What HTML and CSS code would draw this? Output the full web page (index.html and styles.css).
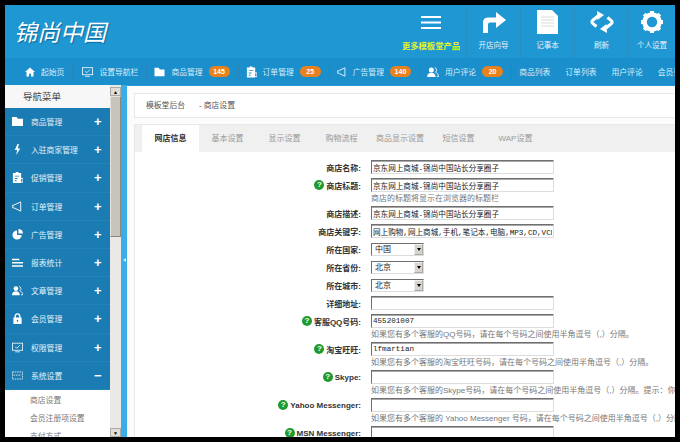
FILE: index.html
```html
<!DOCTYPE html>
<html lang="zh">
<head>
<meta charset="utf-8">
<title>锦尚中国</title>
<link rel="stylesheet" href="styles.css">
</head>
<body>
<svg class="defs" width="0" height="0">
  <symbol id="i-folder" viewBox="0 0 12 12"><path d="M0 1h5l1.500 2H12v8H0z" fill="currentColor"/></symbol>
  <symbol id="i-bolt" viewBox="0 0 12 12"><path d="M6 0 3 6.500h2.600L4.600 12 9 4.800H6.400L7.600 0z" fill="currentColor"/></symbol>
  <symbol id="i-clip" viewBox="0 0 12 12"><path d="M4 0h3v1h3v11H1V1h3zM3 4v1h5V4zm0 2.500v1h3v-1zm0 2.500v1h2V9z" fill="currentColor" fill-rule="evenodd"/><rect x="7" y="7" width="5" height="4" fill="none" stroke="currentColor"/></symbol>
  <symbol id="i-speaker" viewBox="0 0 12 12"><path d="M9.500 1 2 4.500H.8v3H2L9.500 11z" fill="none" stroke="currentColor"/></symbol>
  <symbol id="i-pie" viewBox="0 0 12 12"><path d="M5.500 1.500A5 5 0 1 0 10.500 6.500H5.500z" fill="currentColor"/><path d="M7 0a5 5 0 0 1 5 5H7z" fill="currentColor"/></symbol>
  <symbol id="i-list" viewBox="0 0 12 12"><path d="M0 2h8v1.500H0zM0 5.500h12V7H0zM0 9h12v1.500H0z" fill="currentColor"/></symbol>
  <symbol id="i-users" viewBox="0 0 14 12"><circle cx="5" cy="3.500" r="3" fill="currentColor"/><path d="M0 12c0-3.500 2-5 5-5s5 1.500 5 5z" fill="currentColor"/><path d="M9 .8a3 3 0 0 1 1 5.400c2 .6 3.500 2.500 3.500 5.300h-2" fill="none" stroke="currentColor"/></symbol>
  <symbol id="i-lock" viewBox="0 0 12 12"><path d="M3.500 5.500V3.500a2.500 2.500 0 0 1 5 0v2" fill="none" stroke="currentColor" stroke-width="1.500"/><path d="M1.500 5h9v7h-9zM5.300 7.500v2h1.400v-2z" fill="currentColor" fill-rule="evenodd"/></symbol>
  <symbol id="i-monitor" viewBox="0 0 14 12"><rect x=".5" y=".5" width="13" height="9" fill="none" stroke="currentColor"/><path d="m4 5 2 2 4-4" fill="none" stroke="currentColor"/><path d="M4 11.500h6" stroke="currentColor"/></symbol>
  <symbol id="i-keys" viewBox="0 0 14 12"><rect x=".5" y="1.500" width="13" height="9" fill="none" stroke="currentColor" stroke-dasharray="2 1"/><path d="M2 5.500h10" stroke="currentColor" stroke-dasharray="2 1"/></symbol>
  <symbol id="i-home" viewBox="0 0 12 12"><path d="M6 .5 0 6h1.800v5.500h3V8h2.400v3.500h3V6H12z" fill="currentColor"/></symbol>
</svg>
<div class="app">
  <header class="top">
    <div class="logo">锦尚中国</div>
    <div class="tools">
      <a class="tool tool-more">
        <svg class="tool-icon" width="20" height="13" viewBox="0 0 20 13"><path d="M0 0h20v2H0zM0 5.500h20v2H0zM0 11h20v2H0z" fill="#fff"/></svg>
        <span class="more-label">更多模板堂产品</span>
      </a>
      <a class="tool">
        <svg class="tool-icon" width="24" height="24" viewBox="0 0 24 24"><path d="M1 23V12c0-3 2-4.500 5-4.500h8V2l10 8-10 8v-5.500H8C6.500 12.500 6 13.500 6 15v8z" fill="#fff"/></svg>
        <span>开店向导</span>
      </a>
      <a class="tool">
        <svg class="tool-icon" width="21" height="24" viewBox="0 0 21 24"><path d="M0 0h15l6 6v18H0z" fill="#fff"/><path d="M4 7h13M4 10h13M4 13h13M4 16h13" stroke="#dcdcdc"/></svg>
        <span>记事本</span>
      </a>
      <a class="tool">
        <svg class="tool-icon" width="24" height="24" viewBox="0 0 24 24"><path d="M8 6 2.500 10.500c-1 .9-.8 2 .2 2.800L6.500 16.500" fill="none" stroke="#fff" stroke-width="3"/><path d="M7 1l7 4-6.500 5z" fill="#fff"/><path d="M16 18l5.500-4.500c1-.9.8-2-.2-2.800L17.500 7.500" fill="none" stroke="#fff" stroke-width="3"/><path d="M17 23l-7-4 6.500-5z" fill="#fff"/></svg>
        <span>刷新</span>
      </a>
      <a class="tool tool-last">
        <svg class="tool-icon" width="24" height="24" viewBox="0 0 24 24"><circle cx="12" cy="12" r="7.500" fill="none" stroke="#fff" stroke-width="4.500"/><path d="M12 1v22M1 12h22M4.200 4.200l15.600 15.600M19.800 4.200 4.200 19.800" stroke="#fff" stroke-width="4"/><circle cx="12" cy="12" r="5.200" fill="#1e97d3"/></svg>
        <span>个人设置</span>
      </a>
    </div>
  </header>
  <nav class="nav">
    <a class="nav-item ni-home"><svg class="nav-icon" width="10" height="10"><use href="#i-home"/></svg>起始页</a>
    <a class="nav-item"><svg class="nav-icon" width="11" height="10"><use href="#i-monitor"/></svg>设置导航栏</a>
    <a class="nav-item"><svg class="nav-icon" width="11" height="10"><use href="#i-folder"/></svg>商品管理<b class="badge">145</b></a>
    <a class="nav-item"><svg class="nav-icon" width="11" height="12"><use href="#i-clip"/></svg>订单管理<b class="badge">25</b></a>
    <a class="nav-item"><svg class="nav-icon" width="10" height="10"><use href="#i-speaker"/></svg>广告管理<b class="badge">140</b></a>
    <a class="nav-item"><svg class="nav-icon" width="12" height="10"><use href="#i-users"/></svg>用户评论<b class="badge">20</b></a>
    <a class="nav-link">商品列表</a>
    <a class="nav-link">订单列表</a>
    <a class="nav-link">用户评论</a>
    <a class="nav-link">会员列表</a>
  </nav>
  <div class="body">
    <aside class="side">
      <h2 class="side-title">导航菜单</h2>
      <ul class="menu">
        <li class="menu-row"><svg class="menu-icon" width="11" height="11"><use href="#i-folder"/></svg><span class="menu-text">商品管理</span><i class="sign">+</i></li>
        <li class="menu-row"><svg class="menu-icon" width="11" height="11"><use href="#i-bolt"/></svg><span class="menu-text">入驻商家管理</span><i class="sign">+</i></li>
        <li class="menu-row"><svg class="menu-icon" width="11" height="11"><use href="#i-clip"/></svg><span class="menu-text">促销管理</span><i class="sign">+</i></li>
        <li class="menu-row"><svg class="menu-icon" width="11" height="11"><use href="#i-speaker"/></svg><span class="menu-text">订单管理</span><i class="sign">+</i></li>
        <li class="menu-row"><svg class="menu-icon" width="11" height="11"><use href="#i-pie"/></svg><span class="menu-text">广告管理</span><i class="sign">+</i></li>
        <li class="menu-row"><svg class="menu-icon" width="11" height="11"><use href="#i-list"/></svg><span class="menu-text">报表统计</span><i class="sign">+</i></li>
        <li class="menu-row"><svg class="menu-icon" width="12" height="11"><use href="#i-users"/></svg><span class="menu-text">文章管理</span><i class="sign">+</i></li>
        <li class="menu-row"><svg class="menu-icon" width="11" height="11"><use href="#i-lock"/></svg><span class="menu-text">会员管理</span><i class="sign">+</i></li>
        <li class="menu-row"><svg class="menu-icon" width="12" height="11"><use href="#i-monitor"/></svg><span class="menu-text">权限管理</span><i class="sign">+</i></li>
        <li class="menu-row"><svg class="menu-icon" width="12" height="11"><use href="#i-keys"/></svg><span class="menu-text">系统设置</span><i class="sign">−</i></li>
      </ul>
      <ul class="submenu">
        <li>商店设置</li>
        <li>会员注册项设置</li>
        <li>支付方式</li>
      </ul>
    </aside>
    <div class="scrollbar">
      <span class="sb-btn">▲</span>
      <span class="sb-thumb"></span>
      <span class="sb-track"></span>
      <span class="sb-btn">▼</span>
    </div>
    <div class="splitter"><span class="split-arrow"></span></div>
    <main class="main">
      <div class="crumb"><span class="crumb-a">模板堂后台</span><span>- 商店设置</span></div>
      <section class="panel">
        <div class="tabs">
          <a class="tab tab-on">网店信息</a>
          <a class="tab">基本设置</a>
          <a class="tab">显示设置</a>
          <a class="tab">购物流程</a>
          <a class="tab">商品显示设置</a>
          <a class="tab">短信设置</a>
          <a class="tab">WAP设置</a>
        </div>
        <form class="form">
          <div class="row"><label class="lab">商店名称:</label><input class="inp" value="京东网上商城-锦尚中国站长分享圈子"></div>
          <div class="row"><label class="lab"><i class="help">?</i>商店标题:</label><input class="inp" value="京东网上商城-锦尚中国站长分享圈子"></div>
          <p class="hint">商店的标题将显示在浏览器的标题栏</p>
          <div class="row"><label class="lab">商店描述:</label><input class="inp" value="京东网上商城-锦尚中国站长分享圈子"></div>
          <div class="row"><label class="lab">商店关键字:</label><input class="inp" value="网上购物,网上商城,手机,笔记本,电脑,MP3,CD,VCD"></div>
          <div class="row"><label class="lab">所在国家:</label><div class="sel"><span class="sel-v">中国</span><span class="sel-b"></span></div></div>
          <div class="row"><label class="lab">所在省份:</label><div class="sel"><span class="sel-v">北京</span><span class="sel-b"></span></div></div>
          <div class="row"><label class="lab">所在城市:</label><div class="sel"><span class="sel-v">北京</span><span class="sel-b"></span></div></div>
          <div class="row"><label class="lab">详细地址:</label><input class="inp" value=""></div>
          <div class="row"><label class="lab"><i class="help">?</i>客服QQ号码:</label><input class="inp" value="455201007"></div>
          <p class="hint">如果您有多个客服的QQ号码，请在每个号码之间使用半角逗号（,）分隔。</p>
          <div class="row"><label class="lab"><i class="help">?</i>淘宝旺旺:</label><input class="inp" value="lfmartian"></div>
          <p class="hint">如果您有多个客服的淘宝旺旺号码，请在每个号码之间使用半角逗号（,）分隔。</p>
          <div class="row"><label class="lab"><i class="help">?</i>Skype:</label><input class="inp" value=""></div>
          <p class="hint">如果您有多个客服的Skype号码，请在每个号码之间使用半角逗号（,）分隔。提示：你需要</p>
          <div class="row"><label class="lab"><i class="help">?</i>Yahoo Messenger:</label><input class="inp" value=""></div>
          <p class="hint">如果您有多个客服的 Yahoo Messenger 号码，请在每个号码之间使用半角逗号（,）分隔。</p>
          <div class="row"><label class="lab"><i class="help">?</i>MSN Messenger:</label><input class="inp" value=""></div>
        </form>
      </section>
    </main>
  </div>
</div>
</body>
</html>
```
FILE: styles.css
```css
* { box-sizing: border-box; }
html, body { margin: 0; height: 100%; background: #000; }
body {
  padding: 5px;
  overflow: hidden;
  font-family: "Liberation Sans", "Noto Sans CJK SC", sans-serif;
  font-size: 8px;
  color: #555;
}
.defs { display: block; position: absolute; }
ul { list-style: none; margin: 0; padding: 0; }
.app { width: 670px; height: 432px; overflow: hidden; background: #fff; display: flex; flex-direction: column; }

.top { height: 53px; flex: none; background: #1e97d3; display: flex; justify-content: space-between; }
.logo {
  width: 200px;
  padding: 12px 0 0 9px;
  font-family: "Noto Sans CJK SC", sans-serif;
  font-weight: 400;
  font-style: italic;
  font-size: 23px;
  line-height: 28px;
  color: #fff;
  text-shadow: 1px 1px 1px #0d6a9c;
}
.tools { display: flex; }
.tool {
  width: 54px;
  display: flex;
  flex-direction: column;
  align-items: center;
  padding-top: 5px;
  color: #e4f3fb;
  font-size: 7.500px;
  border-left: 1px solid #2a8dc2;
}
.tool-icon { height: 24px; margin-bottom: 5px; flex: none; }
.tool-last { width: 47px; }
.tool-more { width: 70px; border-left: 0; padding-top: 5px; }
.tool-more .tool-icon { margin-top: 6px; margin-bottom: 10px; height: 13px; }
.more-label { color: #e4f32c; font-weight: 700; font-size: 8.300px; white-space: nowrap; }

.nav { height: 27px; flex: none; background: #1a8fcc; display: flex; align-items: center; color: #d8eef9; white-space: nowrap; overflow: hidden; padding-left: 20px; }
.nav-item { display: flex; align-items: center; height: 14px; padding-right: 8px; margin-right: 7px; border-right: 1px solid #2c83b5; font-size: 7.800px; }
.nav-icon { margin-right: 6px; color: #fff; flex: none; }
.ni-home { margin-right: 9px; }
.badge { margin-left: 6px; width: 21px; height: 11px; line-height: 11px; border-radius: 6px; background: #e8811e; color: #fff; text-align: center; font-size: 7px; }
.nav-link { font-size: 7.800px; margin-right: 15px; flex: none; }

.body { flex: 1; min-height: 0; display: flex; }
.side { width: 105px; flex: none; overflow: hidden; background: #fff; }
.side-title { margin: 0; height: 23px; padding-left: 18px; line-height: 23px; font-size: 9.500px; font-weight: 400; color: #444; background: #f7f7f7; }
.menu { background: #1a7cb3; }
.menu-row { height: 28.200px; display: flex; align-items: center; color: #e4f2f9; border-bottom: 1px solid #2283b8; font-size: 7.800px; padding-left: 7px; }
.menu-icon { width: 11px; margin-right: 8px; flex: none; color: #fff; }
.menu-text { flex: 1; white-space: nowrap; }
.sign { width: 16px; font-style: normal; font-weight: 700; font-size: 13px; color: #fff; flex: none; }
.submenu li { height: 18px; line-height: 18px; padding-left: 25px; color: #777; font-size: 7.800px; }
.submenu li:first-child { margin-top: 2px; }

.scrollbar { width: 11px; flex: none; display: flex; flex-direction: column; background: #ebe9e6; }
.sb-btn { height: 9px; flex: none; font-size: 5px; line-height: 9px; text-align: center; background: #e0ddd6; color: #000; border: 1px solid #aaa; margin-top: 2px; }
.sb-btn:last-child { margin-top: 0; margin-bottom: 0; }
.sb-thumb { height: 141px; flex: none; background: #c8c4bc; border: 1px solid #8a877f; border-top-color: #e6e3dc; border-left-color: #e6e3dc; }
.sb-track { flex: 1; }
.splitter { width: 6px; flex: none; background: #38ade8; display: flex; align-items: center; justify-content: center; padding-bottom: 3px; }
.split-arrow { width: 0; height: 0; border: 2px solid transparent; border-left-width: 0; border-right: 3px solid #d5f0fc; }

.main { flex: 1; min-width: 0; padding: 7px 0 0 7px; background: #fcfcfc; border-top: 1px solid #2196d0; display: flex; flex-direction: column; gap: 6px; overflow: hidden; }
.crumb { height: 25px; flex: none; background: #fff; border: 1px solid #e8e8e8; border-right: 0; padding-left: 11px; line-height: 23px; color: #555; display: flex; gap: 14px; font-size: 7.800px; }
.panel { flex: 1; background: #fff; border: 1px solid #e8e8e8; border-right: 0; border-bottom: 0; }
.tabs { height: 27px; background: #f0f0f0; display: flex; padding-left: 7px; align-items: stretch; }
.tab { width: 57px; text-align: center; line-height: 27px; color: #999; font-size: 8px; white-space: nowrap; flex: none; }
.tab-on { background: #fff; color: #333; font-weight: 700; }
.tab:nth-child(5) { width: 60px; }
.form { padding-top: 6px; }
.row { display: flex; align-items: center; height: 18px; gap: 10px; }
.lab { width: 226px; flex: none; display: flex; justify-content: flex-end; align-items: center; gap: 2px; font-weight: 700; color: #333; font-size: 8px; white-space: nowrap; }
.help { width: 10px; height: 10px; border-radius: 50%; background: #1f9a2c; color: #fff; font-style: normal; font-size: 8px; line-height: 10px; text-align: center; font-weight: 700; }
.inp {
  width: 183px;
  height: 14px;
  padding: 0 1px;
  margin: 0;
  font-family: "Liberation Mono", "Noto Sans CJK SC", monospace;
  font-size: 7.600px;
  color: #222;
  background: #fff;
  border: 1px solid #ddd;
  border-top: 1px solid #6f6f6f;
  border-left: 1px solid #6f6f6f;
  outline: 0;
  box-shadow: inset 0 1px 0 #a8a8a8;
}
.sel { width: 53px; height: 13px; display: flex; background: #fff; border: 1px solid #ddd; border-top-color: #6f6f6f; border-left-color: #6f6f6f; }
.sel-v { flex: 1; padding-left: 3px; line-height: 11px; color: #222; font-size: 8px; }
.sel-b { width: 9px; background: #d8d5ce; border: 1px solid #a8a8a8; border-top-color: #f0f0f0; border-left-color: #f0f0f0; display: flex; align-items: center; justify-content: center; }
.sel-b::after { content: ""; border: 2.500px solid transparent; border-top: 3px solid #000; border-bottom: 0; }
.hint { margin: 0 0 0 236px; height: 10px; line-height: 10px; color: #777; font-size: 8px; white-space: nowrap; }
```
